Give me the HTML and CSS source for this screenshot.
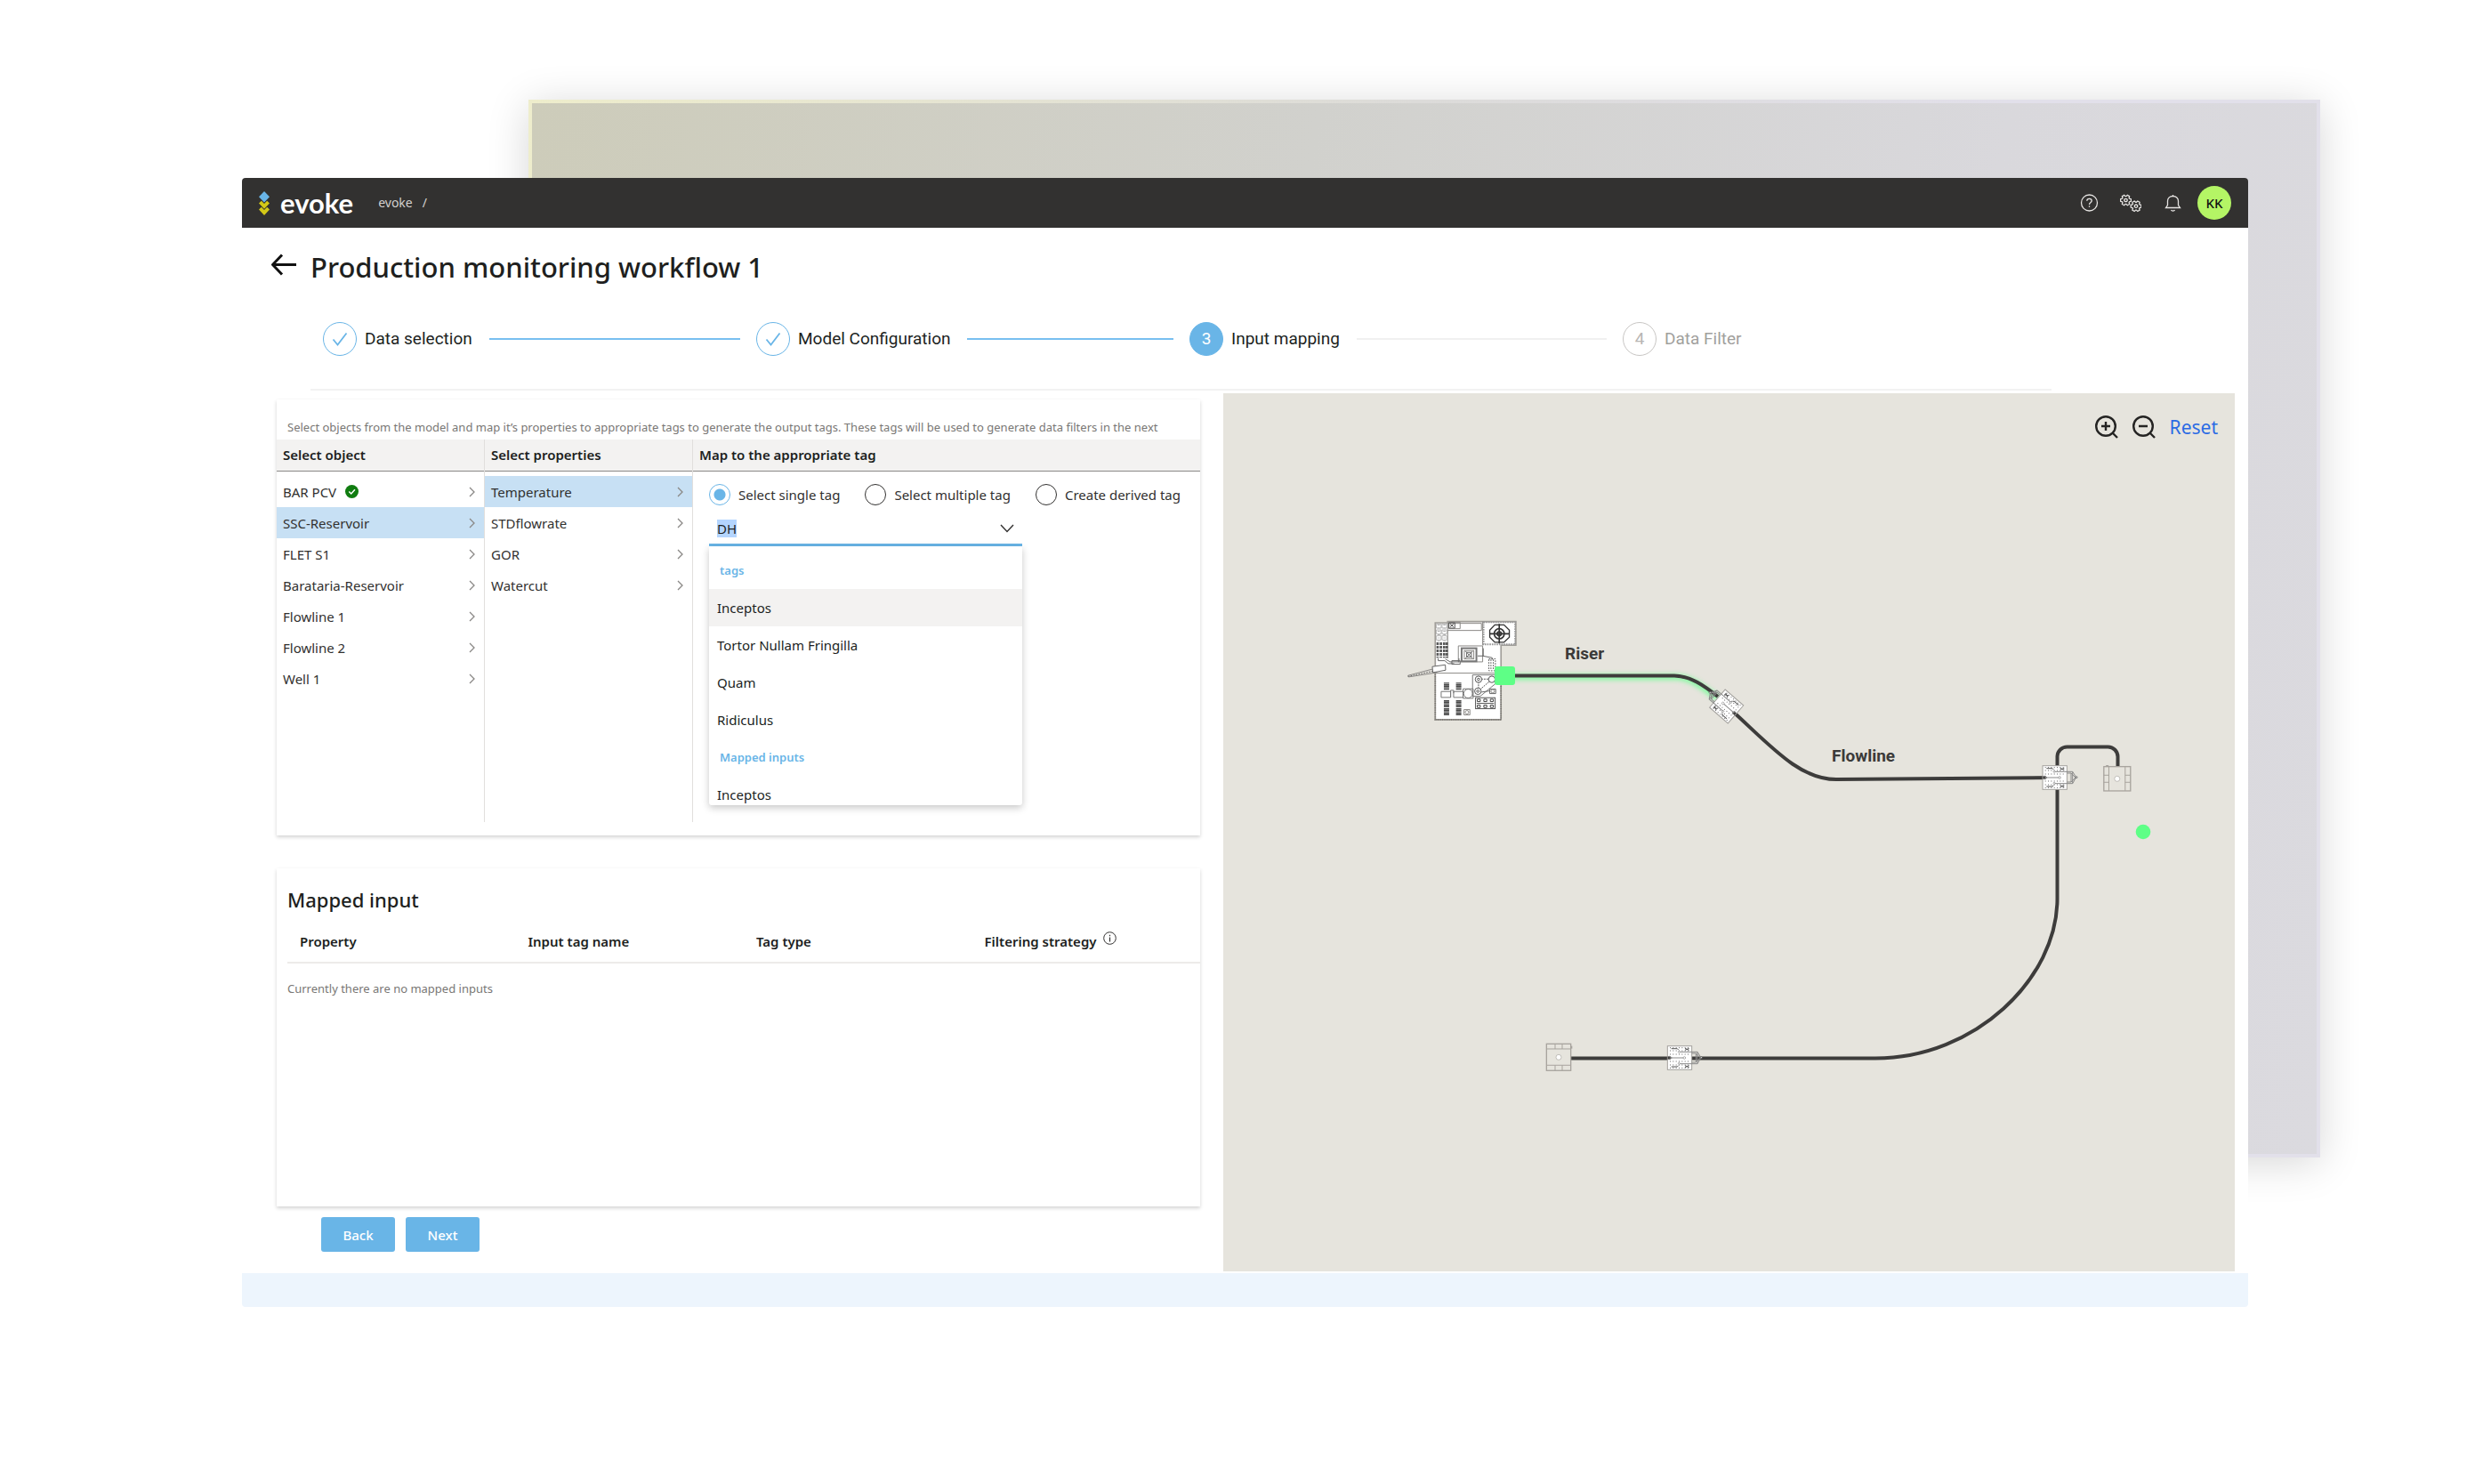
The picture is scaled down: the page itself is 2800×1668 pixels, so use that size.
FILE: index.html
```
<!DOCTYPE html>
<html lang="en">

<head>
    <meta charset="UTF-8">
    <meta name="viewport" content="width=device-width, initial-scale=1.0">
    <title>evoke - Production monitoring workflow 1</title>
    <link rel="stylesheet" href="styles.css">
</head>

<body>
    <!-- Shared icons -->
    <svg class="sprite" width="0" height="0" aria-hidden="true">
        <symbol id="chevron" viewBox="0 0 8 12">
            <path d="M1 1l5 5-5 5" fill="none" stroke="#8a8886" stroke-width="1.3" />
        </symbol>
        <symbol id="tick" viewBox="0 0 18 18">
            <path d="M1.5 9.5l5 6L16.5 2.5" fill="none" stroke="#69b5e7" stroke-width="1.8" />
        </symbol>
        <symbol id="gear" viewBox="-7 -7 14 14">
            <path d="M4 -1.86L5.85 -1.35V1.35L4 1.86L3.61 2.53L4.09 4.39L1.76 5.74L.39 4.39H-.39L-1.76 5.74L-4.09 4.39L-3.61 2.53L-4 1.86L-5.85 1.35V-1.35L-4 -1.86L-3.61 -2.53L-4.09 -4.39L-1.76 -5.74L-.39 -4.39H.39L1.76 -5.74L4.09 -4.39L3.61 -2.53Z" />
            <circle r="1.7" />
        </symbol>
    </svg>

    <div class="stage">
        <div class="backdrop"></div>

        <div class="app">
            <header class="topbar">
                <a class="brand" href="#">
                    <svg width="12" height="27" viewBox="0 0 12 27" aria-hidden="true">
                        <path d="M6 0l6 6.2-6 6.2L0 6.2z" fill="#69b5e7" />
                        <path d="M0 13.5L2.8 10.8 6 14l3.2-3.2L12 13.5 6 19.8z" fill="#d3c817" />
                        <path d="M0 20.5L2.8 17.8 6 21l3.2-3.2L12 20.5 6 27z" fill="#d3c817" />
                    </svg>
                    evoke
                </a>
                <nav class="breadcrumb">
                    <a href="#">evoke</a>
                    <span>/</span>
                </nav>
                <div class="tools">
                    <button type="button" aria-label="Help">
                        <svg width="24" height="24" viewBox="0 0 24 24">
                            <circle cx="12.5" cy="12" r="9" />
                            <path d="M9.8 9.8c0-1.6 1.2-2.5 2.7-2.5s2.7.9 2.7 2.3c0 2.2-2.7 2.1-2.7 4.3M12.5 15.3v1.5" />
                        </svg>
                    </button>
                    <button type="button" aria-label="Settings">
                        <svg width="24" height="24" viewBox="0 0 24 24">
                            <use href="#gear" x="-.5" y="2" width="14" height="14" />
                            <use href="#gear" x="11" y="8.7" width="14" height="14" />
                        </svg>
                    </button>
                    <button type="button" aria-label="Notifications">
                        <svg width="24" height="24" viewBox="0 0 24 24">
                            <path d="M12.5 3v1.5M4.5 17.5h16L18.5 14.5V10c0-3.3-2.6-5.5-6-5.5s-6 2.2-6 5.5v4.500zM10.5 20c.6 1.4 3.4 1.4 4 0" />
                        </svg>
                    </button>
                </div>
                <button type="button" class="avatar">KK</button>
            </header>

            <main>
                <div class="page-head">
                    <a href="#" class="back" aria-label="Back to workflows">
                        <svg width="30" height="30" viewBox="0 0 30 30">
                            <path d="M12 1.5L1.5 12.5 12 23.5M1.5 12.5H28" fill="none" stroke="#111" stroke-width="3" />
                        </svg>
                    </a>
                    <h1>Production monitoring workflow 1</h1>
                </div>

                <ol class="stepper">
                    <li class="step done">
                        <span class="step-mark"><svg width="18" height="18"><use href="#tick" /></svg></span>
                        <span class="step-label">Data selection</span>
                    </li>
                    <li class="step done">
                        <span class="step-mark"><svg width="18" height="18"><use href="#tick" /></svg></span>
                        <span class="step-label">Model Configuration</span>
                    </li>
                    <li class="step current">
                        <span class="step-mark">3</span>
                        <span class="step-label">Input mapping</span>
                    </li>
                    <li class="step pending">
                        <span class="step-mark">4</span>
                        <span class="step-label">Data Filter</span>
                    </li>
                </ol>

                <hr class="divider">

                <div class="workspace">
                    <div class="left">
                        <section class="panel">
                            <p class="hint">Select objects from the model and map it’s properties to appropriate tags to generate the output tags. These tags will be used to generate data filters in the next</p>
                            <div class="columns">
                                <div class="column">
                                    <h2>Select object</h2>
                                    <ul class="picker">
                                        <li><button type="button">BAR PCV
                                            <svg class="ok" width="15" height="15" viewBox="0 0 14 14"><circle cx="7" cy="7" r="7" fill="#107c10" /><path d="M4 7l2.3 2.3L10.2 5" fill="none" stroke="#fff" stroke-width="1.4" /></svg>
                                            <svg class="go" width="8" height="12"><use href="#chevron" /></svg></button></li>
                                        <li><button type="button" class="selected">SSC-Reservoir <svg class="go" width="8" height="12"><use href="#chevron" /></svg></button></li>
                                        <li><button type="button">FLET S1 <svg class="go" width="8" height="12"><use href="#chevron" /></svg></button></li>
                                        <li><button type="button">Barataria-Reservoir <svg class="go" width="8" height="12"><use href="#chevron" /></svg></button></li>
                                        <li><button type="button">Flowline 1 <svg class="go" width="8" height="12"><use href="#chevron" /></svg></button></li>
                                        <li><button type="button">Flowline 2 <svg class="go" width="8" height="12"><use href="#chevron" /></svg></button></li>
                                        <li><button type="button">Well 1 <svg class="go" width="8" height="12"><use href="#chevron" /></svg></button></li>
                                    </ul>
                                </div>
                                <div class="column">
                                    <h2>Select properties</h2>
                                    <ul class="picker">
                                        <li><button type="button" class="selected">Temperature <svg class="go" width="8" height="12"><use href="#chevron" /></svg></button></li>
                                        <li><button type="button">STDflowrate <svg class="go" width="8" height="12"><use href="#chevron" /></svg></button></li>
                                        <li><button type="button">GOR <svg class="go" width="8" height="12"><use href="#chevron" /></svg></button></li>
                                        <li><button type="button">Watercut <svg class="go" width="8" height="12"><use href="#chevron" /></svg></button></li>
                                    </ul>
                                </div>
                                <div class="column">
                                    <h2>Map to the appropriate tag</h2>
                                    <div class="mapping">
                                        <div class="radios">
                                            <label><input type="radio" name="mode" checked> Select single tag</label>
                                            <label><input type="radio" name="mode"> Select multiple tag</label>
                                            <label><input type="radio" name="mode"> Create derived tag</label>
                                        </div>
                                        <div class="combo">
                                            <input type="text" id="tag" value="DH" aria-label="Tag" role="combobox" aria-expanded="true" aria-controls="tag-list">
                                            <button type="button" aria-label="Toggle list">
                                                <svg width="16" height="10" viewBox="0 0 16 10"><path d="M1 1l7 7.5L15 1" fill="none" stroke="#323130" stroke-width="1.4" /></svg>
                                            </button>
                                        </div>
                                        <div class="menu" id="tag-list" role="listbox">
                                            <div class="group">tags</div>
                                            <div class="option active" role="option">Inceptos</div>
                                            <div class="option" role="option">Tortor Nullam Fringilla</div>
                                            <div class="option" role="option">Quam</div>
                                            <div class="option" role="option">Ridiculus</div>
                                            <div class="group">Mapped inputs</div>
                                            <div class="option" role="option">Inceptos</div>
                                        </div>
                                    </div>
                                </div>
                            </div>
                        </section>

                        <section class="panel mapped">
                            <h2>Mapped input</h2>
                            <table>
                                <thead>
                                    <tr>
                                        <th>Property</th>
                                        <th>Input tag name</th>
                                        <th>Tag type</th>
                                        <th>Filtering strategy
                                            <svg class="info" width="15" height="15" viewBox="0 0 15 15"><circle cx="7.5" cy="7.5" r="6.8" fill="none" stroke="#323130" /><path d="M7.5 6.5v5M7.5 3.8v1.4" stroke="#323130" stroke-width="1.2" /></svg>
                                        </th>
                                    </tr>
                                </thead>
                                <tbody>
                                    <tr>
                                        <td colspan="4">Currently there are no mapped inputs</td>
                                    </tr>
                                </tbody>
                            </table>
                        </section>

                        <div class="actions">
                            <button type="button">Back</button>
                            <button type="button">Next</button>
                        </div>
                    </div>

                    <section class="map">
                        <div class="map-tools">
                            <button type="button" aria-label="Zoom in">
                                <svg width="26" height="26" viewBox="0 0 26 26"><circle cx="12" cy="12" r="10.8" /><path d="M12 7v10M7 12h10M19.5 19.5L25 25" /></svg>
                            </button>
                            <button type="button" aria-label="Zoom out">
                                <svg width="26" height="26" viewBox="0 0 26 26"><circle cx="12" cy="12" r="10.8" /><path d="M7 12h10M19.5 19.5L25 25" /></svg>
                            </button>
                            <button type="button" class="reset">Reset</button>
                        </div>

                        <svg class="field" viewBox="1375 442 1137 987">
                            <defs>
                                <filter id="glow" x="-10%" y="-100%" width="120%" height="300%">
                                    <feGaussianBlur stdDeviation="2.5" />
                                </filter>
                                <!-- Manifold, centred on 0,0 with the connector to the right -->
                                <g id="manifold" fill="none" stroke="#8a8a8a" stroke-width="2">
                                    <rect x="-41" y="-40" width="82" height="80" fill="#fff" stroke="#a3a19d" stroke-width="3" />
                                    <path d="M-33 -34H36M-33 -24H36M-33 -12H36M-33 12H36M-33 24H36M-33 34H36" stroke="#666" stroke-width="3" stroke-dasharray="3 7" />
                                    <path d="M-28 -31H-8L-4 -27M-28 30H-8L-4 26M18 -32L32 -26M18 -26L32 -32M18 26L32 32M18 32L32 26" stroke="#555" stroke-width="3" />
                                    <path d="M-40 0H-30" stroke="#3d3c3b" stroke-width="10" />
                                    <path d="M-34 0H15M-34 -6l8 6-8 6M-2 -20H60V20H-2M41 -15H55V15H41M60 -20L72 -1L60 20M55 -15L70 0L55 15" stroke-width="3" />
                                    <circle cx="16" cy="0" r="4" fill="#fff" />
                                    <circle cx="-2" cy="-20" r="3" fill="#fff" />
                                    <circle cx="-2" cy="19" r="3" fill="#fff" />
                                    <circle cx="73" cy="-1" r="3" fill="#fff" stroke="#444" />
                                </g>
                                <!-- Reservoir template -->
                                <g id="template" fill="none" stroke="#a8a49e" stroke-width="4">
                                    <rect x="-45" y="-41" width="90" height="82" />
                                    <path d="M-28 -41V41M27 -41V41M-45 -12H-28M-45 12H-28M27 -12H45M27 12H45" stroke-width="3" />
                                    <path d="M-38 -44h9" />
                                    <circle r="9" fill="#fff" stroke-width="2" />
                                </g>
                            </defs>

                            <path class="riser-glow" d="M1690 761H1883C1901 761 1915 773 1931 785" filter="url(#glow)" />
                            <g class="pipe">
                                <path d="M1690 759.5H1882C1900 759.5 1916 771 1931 783" />
                                <path d="M1946 798C1990 838 2022 876 2064 876L2312 874" />
                                <path d="M2312.5 874V850a11 11 0 0 1 11-10.5h46a11 11 0 0 1 11 11V862" />
                                <path d="M2312.5 874V1010C2312.5 1100 2220 1189.5 2108 1189.5H1766" />
                            </g>

                            <use href="#manifold" transform="translate(1940.7 794) rotate(221) scale(.333)" />
                            <use href="#manifold" transform="translate(2309.7 874) scale(.333)" />
                            <use href="#manifold" transform="translate(1888 1189) scale(.333)" />
                            <use href="#template" transform="translate(2379.8 875.3) scale(.333)" />
                            <use href="#template" transform="translate(1752 1188.3) rotate(90) scale(.333)" />

                            <!-- Production platform -->
                            <g transform="translate(1570 680) scale(.333)" fill="none" stroke="#8c8a87" stroke-width="3">
                                <path d="M130 60H172V56H402V136H352V387H130z" fill="#fff" stroke="#a19e99" stroke-width="5" />
                                <path d="M130 230V387H352V230" stroke="#77746f" stroke-width="5" stroke-dasharray="3 2" />
                                <path d="M130 230H352M172 60V180M290 56V136M176 62H286V86H172M176 58h38v22h-38z" />
                                <path d="M176 60h20v18h-20zM180 64l12 10M192 64l-12 10" stroke="#555" />
                                <rect x="293" y="58" width="107" height="75" stroke-width="6" stroke="#999" stroke-dasharray="5 3" />
                                <g stroke="#333" stroke-width="5">
                                    <path d="M331 67h31l18 18v24l-18 17h-31l-17-17V85z" stroke-width="4" />
                                    <path d="M346 64V130M313 97H381" />
                                    <circle cx="346" cy="97" r="17" />
                                    <circle cx="346" cy="97" r="7" />
                                </g>
                                <g stroke="#999" stroke-width="2">
                                    <path d="M134 64h16v14h-16zM153 64h16v14h-16zM134 84h16v14h-16zM153 84h16v14h-16zM134 104h16v14h-16zM153 104h16v14h-16z" />
                                    <path d="M142 66V122M161 66V122" stroke-width="8" stroke-dasharray="2 9" />
                                </g>
                                <path d="M138 126v52M149 126v52M160 126v52M169 126v52" stroke="#5a5a5a" stroke-width="8" stroke-dasharray="9 3" />
                                <path d="M208 138h82v54h-82z" />
                                <rect x="219" y="146" width="50" height="44" stroke="#777" stroke-width="6" />
                                <rect x="228" y="154" width="32" height="28" />
                                <path d="M236 160h16v16h-16zM232 156l24 24M256 156l-24 24" stroke="#666" />
                                <path d="M273 172H292V146M290 172L322 178V184M140 180v8h22l12 10h20M164 182l16 10h30V180M186 188h28v12h-28z" stroke="#666" />
                                <path d="M311 182h22v40h-22zM318 184v36M326 184v36" stroke-dasharray="5 4" stroke="#555" />
                                <path d="M38 238L122 216L136 228L40 243z" fill="#dedcd6" />
                                <path d="M38 241L130 222" stroke="#666" stroke-dasharray="5 4" />
                                <path d="M120 208l44-6 1 18-43 8z" fill="#fff" stroke="#666" />
                                <path d="M256 236H340V260L282 308H256z" stroke="#777" />
                                <path d="M276 250H318M276 250V290L322 250" stroke="#555" stroke-dasharray="6 3" />
                                <g fill="#fff" stroke="#555">
                                    <circle cx="276" cy="251" r="11" />
                                    <circle cx="321" cy="251" r="11" />
                                    <circle cx="274" cy="291" r="11" />
                                    <circle cx="276" cy="251" r="4" />
                                    <circle cx="274" cy="291" r="4" />
                                </g>
                                <path d="M286 294L314 290M314 284h20v15h-20z" stroke="#666" />
                                <circle cx="324" cy="291" r="6" />
                                <path d="M224 283h34v32h-34zM150 292h32v20h-32zM182 312v-24h10v10M192 292h32v20h-32z" stroke="#777" />
                                <circle cx="241" cy="299" r="15" stroke="#777" />
                                <g stroke="#4a4a4a" stroke-width="18" stroke-dasharray="4 1">
                                    <path d="M168 262v24M209 262v24M168 321v24M209 321v24M168 348v24M209 348v24" />
                                </g>
                                <path d="M227 353h20v18h-20z" />
                                <circle cx="237" cy="362" r="6" />
                                <rect x="266" y="313" width="66" height="37" stroke="#555" />
                                <path d="M270 332H328" stroke="#555" />
                                <path d="M272 318h10v8h-10zM294 318h10v8h-10zM316 318h10v8h-10zM272 338h10v8h-10zM294 338h10v8h-10zM316 338h10v8h-10z" stroke="#444" />
                            </g>

                            <rect x="1680" y="749" width="23" height="21" rx="3" fill="#5eff86" />
                            <circle cx="2409" cy="935" r="8.3" fill="#5eff86" />
                            <text class="map-label" x="1759" y="741">Riser</text>
                            <text class="map-label" x="2059" y="856">Flowline</text>
                        </svg>
                    </section>
                </div>
            </main>

            <footer class="statusbar"></footer>
        </div>
    </div>

    <script>
        // open with the current tag ready to be overwritten
        const tag = document.getElementById("tag");
        tag.focus();
        tag.select();
    </script>
</body>

</html>
```
FILE: styles.css
```
* {
    box-sizing: border-box;
}

body {
    margin: 0;
    background-color: #fff;
    color: #201f1e;
    font-family: "Noto Sans", "Open Sans", sans-serif;
    font-size: 15px;
    line-height: 20px;
}

h1,
h2,
p,
ul,
ol {
    margin: 0;
    padding: 0;
}

ul,
ol {
    list-style: none;
}

svg {
    display: block;
}

button {
    margin: 0;
    padding: 0;
    border: none;
    background: none;
    color: inherit;
    font: inherit;
    cursor: pointer;
}

.sprite {
    position: absolute;
}

/* The app window sits over the backdrop in one shared cell */
.stage {
    display: grid;
    padding: 112px 192px 80px 272px;
}

.backdrop {
    grid-area: 1 / 1;
    margin: 0 0 168px 322px;
    border: 4px solid;
    border-image: linear-gradient(100deg, #eeedcc, #dcdbd9 45%, #e2e0ea 75%) 1;
    background: linear-gradient(100deg, #cdccba, #d1d1cd 40%, #d9d8dc 75%, #dbdadf);
    box-shadow: 0 6px 44px rgba(0, 0, 0, 0.16);
}

.app {
    grid-area: 1 / 1;
    display: flex;
    flex-direction: column;
    margin: 88px 81px 0 0;
    border-radius: 4px;
    background-color: #fff;
    overflow: hidden;
}

/* Top bar */
.topbar {
    display: flex;
    align-items: center;
    height: 56px;
    padding: 0 19px;
    background-color: #323130;
    color: #fff;
}

.brand {
    display: flex;
    align-items: center;
    gap: 12px;
    color: #fff;
    font-family: Lato, sans-serif;
    font-size: 31px;
    font-weight: 700;
    line-height: 36px;
    text-decoration: none;
}

.breadcrumb {
    display: flex;
    gap: 11px;
    margin-left: 28px;
    color: #d2d0ce;
    font-size: 14px;
}

.breadcrumb a {
    color: inherit;
    text-decoration: none;
}

.tools {
    display: flex;
    gap: 23px;
    margin-left: auto;
}

.tools svg {
    fill: none;
    stroke: #e6e4e2;
    stroke-width: 1.3;
}

.avatar {
    width: 38px;
    height: 38px;
    margin-left: 16px;
    border-radius: 50%;
    background-color: #b4f565;
    color: #111;
    font-size: 15px;
    font-weight: 500;
}

/* Title and steps */
.page-head {
    display: flex;
    align-items: center;
    gap: 14px;
    padding: 22px 33px 0;
}

h1 {
    font-size: 31px;
    font-weight: 500;
    line-height: 44px;
}

.stepper {
    display: grid;
    grid-template-columns: repeat(4, 1fr);
    padding: 40px 216px 37px 91px;
    font-family: Roboto, sans-serif;
    font-size: 19px;
}

.step {
    display: flex;
    align-items: center;
    gap: 9px;
}

.step:not(:last-child)::after {
    content: "";
    flex: 1;
    height: 2px;
    margin: 0 18px 0 10px;
    background-color: #f0f0f0;
}

.step-mark {
    display: flex;
    align-items: center;
    justify-content: center;
    width: 38px;
    height: 38px;
    border: 1px solid #69b5e7;
    border-radius: 50%;
}

.step.done::after {
    background-color: #78bff0;
}

.step.current .step-mark {
    background-color: #69b5e7;
    color: #fff;
}

.step.pending {
    color: #a19f9d;
}

.step.pending .step-mark {
    border-color: #c8c6c4;
    color: #b8b6b4;
}

.divider {
    height: 2px;
    margin: 0 221px 0 77px;
    border: none;
    background-color: #f2f2f2;
}

/* Panels and map */
.workspace {
    display: grid;
    grid-template-columns: 1038fr 1137fr;
    gap: 26px;
    padding: 3px 15px 2px 39px;
}

.left {
    display: flex;
    flex-direction: column;
    padding-top: 7px;
}

.panel {
    padding-bottom: 15px;
    box-shadow: 0 2px 4px rgba(0, 0, 0, 0.18);
}

.hint {
    padding: 21px 12px 4px;
    color: #797775;
    font-size: 13px;
    white-space: nowrap;
}

.columns {
    display: grid;
    grid-template-columns: 233fr 234fr 571fr;
}

.column + .column {
    border-left: 1px solid #e1dfdd;
}

.column h2 {
    padding: 0 7px;
    border-bottom: 1px solid #8a8886;
    background-color: #f3f2f1;
    font-size: 15px;
    font-weight: 600;
    line-height: 35px;
}

.picker {
    padding-top: 5px;
}

.picker button {
    display: flex;
    align-items: center;
    gap: 10px;
    width: 100%;
    height: 35px;
    padding: 0 9px 0 7px;
    color: #323130;
    text-align: left;
}

.picker .selected {
    background-color: #c7e0f4;
}

.picker .go {
    margin-left: auto;
}

.mapping {
    padding: 14px 18px 19px;
}

.radios {
    display: flex;
    gap: 28px;
}

.radios label {
    display: flex;
    align-items: center;
    gap: 9px;
    color: #323130;
    line-height: 24px;
    white-space: nowrap;
}

.radios input {
    appearance: none;
    width: 24px;
    height: 24px;
    margin: 0;
    border: 1px solid #323130;
    border-radius: 50%;
}

.radios input:checked {
    border-color: #69b5e7;
    background: radial-gradient(circle, #69b5e7 6px, transparent 7px);
}

.combo {
    display: flex;
    align-items: center;
    width: 352px;
    margin-top: 9px;
    border-bottom: 3px solid #69b5e7;
}

.combo input {
    flex: 1;
    min-width: 0;
    height: 34px;
    padding: 0 9px;
    border: none;
    outline: none;
    background: none;
    color: #201f1e;
    font: inherit;
}

.combo input::selection {
    background-color: #b4d5fe;
    color: #201f1e;
}

.combo button {
    padding: 0 9px;
}

.menu {
    width: 352px;
    height: 291px;
    padding-top: 6px;
    border-radius: 0 0 3px 3px;
    box-shadow: 0 3px 8px rgba(0, 0, 0, 0.22);
    overflow: hidden;
}

.group,
.option {
    padding: 0 9px;
    line-height: 42px;
}

.group {
    padding-left: 12px;
    color: #69b5e7;
    font-size: 13px;
    font-weight: 600;
}

.option.active {
    background-color: #f3f2f1;
}

/* Mapped input table */
.mapped {
    flex: 1;
    margin-top: 37px;
    padding: 20px 0 0 12px;
}

.mapped h2 {
    margin-bottom: 8px;
    font-size: 22px;
    font-weight: 500;
    line-height: 30px;
}

table {
    width: 100%;
    border-collapse: collapse;
    table-layout: fixed;
}

th {
    padding: 13px 14px;
    border-bottom: 2px solid #edebe9;
    font-weight: 600;
    text-align: left;
}

td {
    padding: 18px 0;
    color: #797775;
    font-size: 13px;
}

.info {
    display: inline-block;
    margin-left: 4px;
    vertical-align: 2px;
}

.actions {
    display: flex;
    gap: 12px;
    padding: 12px 50px 22px;
}

.actions button {
    width: 83px;
    height: 39px;
    border-radius: 3px;
    background-color: #69b5e7;
    color: #fff;
    font-weight: 500;
}

/* Field map */
.map {
    position: relative;
    background-color: #e6e4dd;
}

.map-tools {
    position: absolute;
    top: 23px;
    right: 19px;
    display: flex;
    align-items: center;
    gap: 16px;
}

.map-tools svg {
    fill: none;
    stroke: #252423;
    stroke-width: 2.4;
}

.reset {
    color: #2b6be4;
    font-size: 21px;
    line-height: 30px;
}

.field {
    width: 100%;
    height: auto;
}

.pipe {
    fill: none;
    stroke: #3d3c3b;
    stroke-width: 4;
}

.riser-glow {
    fill: none;
    opacity: 0.75;
    stroke: #6dff92;
    stroke-width: 7;
}

.map-label {
    fill: #3b3a39;
    font-family: Roboto, sans-serif;
    font-size: 19px;
    font-weight: 700;
}

.statusbar {
    height: 38px;
    background-color: #edf5fd;
}
```
